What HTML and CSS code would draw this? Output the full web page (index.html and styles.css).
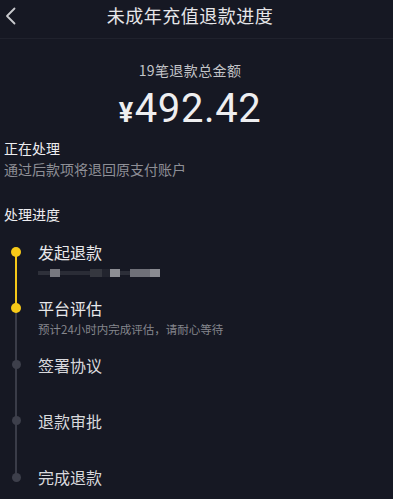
FILE: index.html
```html
<!DOCTYPE html>
<html lang="zh-CN">
<head>
<meta charset="utf-8">
<link rel="stylesheet" href="styles.css">
</head>
<body>
<header class="topbar">
  <svg class="back" width="14" height="20" viewBox="0 0 14 20"><path d="M11.5 2.5 L4 10 L11.5 17.5" fill="none" stroke="#c9cace" stroke-width="1.8" stroke-linecap="round" stroke-linejoin="round"/></svg>
  <h1 class="title">未成年充值退款进度</h1>
</header>
<section class="summary">
  <div class="summary-label">19笔退款总金额</div>
  <div class="amount"><span class="yen">¥</span>492.42</div>
</section>
<section class="status">
  <div class="status-title">正在处理</div>
  <div class="status-desc">通过后款项将退回原支付账户</div>
</section>
<section class="progress">
  <div class="progress-title">处理进度</div>
  <ol class="steps">
    <li class="step done link-done">
      <span class="dot"></span>
      <div class="step-name">发起退款</div>
      <div class="mosaic"><i class="m1"></i><i class="m2"></i><i class="m3"></i><i class="m4"></i><i class="m5"></i><i class="m6"></i><i class="m7"></i><i class="m8"></i><i class="m9"></i></div>
    </li>
    <li class="step done">
      <span class="dot"></span>
      <div class="step-name">平台评估</div>
      <div class="step-sub">预计24小时内完成评估，请耐心等待</div>
    </li>
    <li class="step">
      <span class="dot"></span>
      <div class="step-name">签署协议</div>
    </li>
    <li class="step">
      <span class="dot"></span>
      <div class="step-name">退款审批</div>
    </li>
    <li class="step last">
      <span class="dot"></span>
      <div class="step-name">完成退款</div>
    </li>
  </ol>
</section>
</body>
</html>
```

FILE: styles.css
```css
* { box-sizing: border-box; }
html, body { margin: 0; padding: 0; }
body {
  background: #161823;
  font-family: "Noto Sans CJK SC", "Noto Sans", sans-serif;
  color: #e4e4e7;
  width: 393px;
  height: 499px;
  overflow: hidden;
}
.topbar {
  height: 39px;
  border-bottom: 1px solid #20222d;
  display: flex;
  align-items: center;
  justify-content: center;
  padding-right: 13px;
  position: relative;
}
.back {
  position: absolute;
  left: 3px;
  top: 6px;
}
.title {
  margin: 0;
  font-size: 18px;
  font-weight: 400;
  line-height: 24px;
  color: #e6e6e9;
  margin-top: -8px;
  letter-spacing: 0.5px;
}
.summary {
  padding-top: 21px;
  padding-right: 13px;
  text-align: center;
}
.summary-label {
  font-size: 14px;
  line-height: 20px;
  color: #c3c4c8;
  letter-spacing: 0.4px;
}
.amount {
  margin-top: 7px;
  font-family: Roboto, "Noto Sans", sans-serif;
  font-size: 40px;
  line-height: 44px;
  color: #eeeef0;
  letter-spacing: 0.6px;
}
.yen {
  font-size: 27px;
  font-weight: 700;
  margin-right: 1px;
}
.status {
  padding-left: 4px;
  margin-top: 3px;
}
.status-title {
  font-size: 14px;
  line-height: 20px;
  color: #ededf0;
}
.status-desc {
  font-size: 14px;
  line-height: 20px;
  color: #8e8f96;
  margin-top: 1px;
}
.progress {
  padding-left: 4px;
  margin-top: 25px;
}
.progress-title {
  font-size: 14px;
  line-height: 20px;
  color: #ededf0;
}
.steps {
  list-style: none;
  margin: 17px 0 0 0;
  padding: 0;
}
.step {
  position: relative;
  height: 56.3px;
  padding-left: 34px;
}
.step::after {
  content: "";
  position: absolute;
  left: 11px;
  top: 11px;
  width: 2px;
  height: 57px;
  background: #3a3c48;
}
.step.link-done::after { background: #f5c818; }
.step.last::after { display: none; }
.dot {
  position: absolute;
  left: 7.5px;
  top: 6.5px;
  width: 9px;
  height: 9px;
  border-radius: 50%;
  background: #3d3f4b;
  z-index: 1;
}
.step.done .dot { background: #f7ca18; width: 10px; height: 10px; left: 7px; top: 6px; }
.step-name {
  font-size: 16px;
  line-height: 22px;
  color: #d9d9dd;
}
.step.done .step-name { color: #e8e8eb; }
.step-sub {
  font-size: 11.5px;
  line-height: 18px;
  color: #85868d;
  margin-top: 1px;
}
.mosaic {
  display: flex;
  align-items: center;
  height: 18px;
  margin-top: 1px;
}
.mosaic i { display: block; height: 8px; }
.m1 { width: 12px; background: #2e303a; height: 4px !important; }
.m2 { width: 10px; background: #77787f; }
.m3 { width: 30px; background: #2a2c36; height: 4px !important; }
.m4 { width: 12px; background: #35373f; }
.m5 { width: 8px; background: #22242e; }
.m6 { width: 10px; background: #8d8e94; }
.m7 { width: 10px; background: #2c2e38; height: 4px !important; }
.m8 { width: 20px; background: #6f7078; }
.m9 { width: 10px; background: #8a8b92; }
```
